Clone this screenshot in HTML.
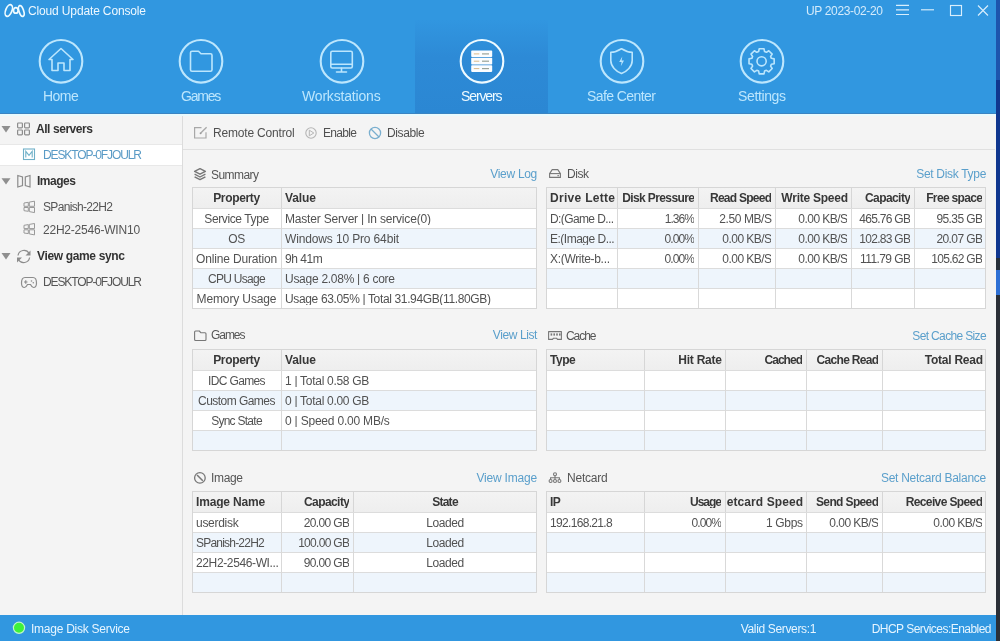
<!DOCTYPE html><html><head><meta charset="utf-8"><style>
*{margin:0;padding:0;box-sizing:border-box}
html,body{width:1000px;height:641px;overflow:hidden;background:#f4f4f4;font-family:"Liberation Sans", sans-serif;font-size:12px;color:#333}
.a{position:absolute}
.t{position:absolute;white-space:nowrap;line-height:1;will-change:transform}
svg{position:absolute;overflow:visible}
</style></head><body><div class="a" style="left:0;top:0;width:1000px;height:113px;background:#3197e0"></div>
<div class="a" style="left:415px;top:20px;width:133px;height:93px;background:linear-gradient(#3196e0,#2d8ad6 40%,#2b87d3)"></div>
<div class="a" style="left:996px;top:0;width:4px;height:80px;background:#1d55ad"></div>
<div class="a" style="left:996px;top:80px;width:4px;height:178px;background:#10378f"></div>
<div class="a" style="left:996px;top:258px;width:4px;height:12px;background:#27303a"></div>
<div class="a" style="left:996px;top:270px;width:4px;height:25px;background:#2f70d4"></div>
<div class="a" style="left:996px;top:295px;width:4px;height:346px;background:#2a2f37"></div>
<svg style="left:0;top:0" width="30" height="22"><g fill="none" stroke="#eefbff" stroke-width="1.7"><ellipse cx="8.8" cy="10.5" rx="3.1" ry="6.1" transform="rotate(22 8.8 10.5)"/><ellipse cx="15.8" cy="10.4" rx="2.3" ry="2.8" /><ellipse cx="21.3" cy="11" rx="2.3" ry="5.6" transform="rotate(-18 21.3 11)"/></g></svg>
<div class="t" style="top:4.54px;font-size:12px;color:#eef8ff;letter-spacing:-0.142px;left:28.00px;">Cloud Update Console</div>
<div class="t" style="top:4.84px;font-size:12px;color:#d4ebfb;letter-spacing:-0.350px;left:806.00px;">UP 2023-02-20</div>
<svg style="left:0;top:0" width="1000" height="30"><g stroke="#d8eefc" stroke-width="1.15" fill="none"><path d="M896 5.3H909M896 9.9H909M896 14.5H909"/><path d="M921 9.8H934"/><rect x="950.5" y="5.5" width="11" height="10"/><path d="M978 5.5L988 15.5M988 5.5L978 15.5"/></g></svg>
<svg style="left:36px;top:36px" width="50" height="50"><circle cx="25" cy="25.3" r="21.3" fill="none" stroke="#bce6fd" stroke-width="2.1"/></svg>
<div class="t" style="top:88.95px;font-size:14px;color:#bce6fd;letter-spacing:-0.517px;left:43.00px;">Home</div>
<svg style="left:176.2px;top:36px" width="50" height="50"><circle cx="25" cy="25.3" r="21.3" fill="none" stroke="#bce6fd" stroke-width="2.1"/></svg>
<div class="t" style="top:88.95px;font-size:14px;color:#bce6fd;letter-spacing:-1.213px;left:180.50px;">Games</div>
<svg style="left:316.5px;top:36px" width="50" height="50"><circle cx="25" cy="25.3" r="21.3" fill="none" stroke="#bce6fd" stroke-width="2.1"/></svg>
<div class="t" style="top:88.95px;font-size:14px;color:#bce6fd;letter-spacing:-0.182px;left:302.40px;">Workstations</div>
<svg style="left:456.5px;top:36px" width="50" height="50"><circle cx="25" cy="25.3" r="21.3" fill="none" stroke="#eefaff" stroke-width="2.1"/></svg>
<div class="t" style="top:88.95px;font-size:14px;color:#eefaff;letter-spacing:-1.117px;left:460.50px;">Servers</div>
<svg style="left:596.5px;top:36px" width="50" height="50"><circle cx="25" cy="25.3" r="21.3" fill="none" stroke="#bce6fd" stroke-width="2.1"/></svg>
<div class="t" style="top:88.95px;font-size:14px;color:#bce6fd;letter-spacing:-0.580px;left:586.80px;">Safe Center</div>
<svg style="left:736.8px;top:36px" width="50" height="50"><circle cx="25" cy="25.3" r="21.3" fill="none" stroke="#bce6fd" stroke-width="2.1"/></svg>
<div class="t" style="top:88.95px;font-size:14px;color:#bce6fd;letter-spacing:-0.371px;left:738.00px;">Settings</div>
<svg style="left:0;top:0" width="1000" height="113"><g fill="none" stroke="#bce6fd" stroke-width="1.6" stroke-linejoin="round" stroke-linecap="round"><path d="M61 48.5 L49 59.5 L52 59.5 L52 70.5 L58 70.5 L58 63 L64 63 L64 70.5 L70 70.5 L70 59.5 L73 59.5 Z"/><path d="M192 51.3 H198.5 L201 53.8 H210.5 Q212 53.8 212 55.3 V69.8 Q212 71.3 210.5 71.3 H192 Q190.5 71.3 190.5 69.8 V52.8 Q190.5 51.3 192 51.3 Z"/><rect x="330.8" y="51.2" width="21.5" height="16.8" rx="1.5"/><path d="M331 64.2 H352 M341.5 68.3 V71.5 M336.5 72 H346.5"/><path d="M621.5 48.8 C617.5 51.3 613.5 52.3 610.8 52.3 V60.5 C610.8 66.5 616 71.3 621.5 73.5 C627 71.3 632.2 66.5 632.2 60.5 V52.3 C629.5 52.3 625.5 51.3 621.5 48.8 Z"/><circle cx="761.6" cy="61.3" r="4.6"/><path d="M771.36 58.34 L774.17 58.90 L774.17 63.70 L771.36 64.26 L770.60 66.11 L772.19 68.49 L768.79 71.89 L766.41 70.30 L764.56 71.06 L764.00 73.87 L759.20 73.87 L758.64 71.06 L756.79 70.30 L754.41 71.89 L751.01 68.49 L752.60 66.11 L751.84 64.26 L749.03 63.70 L749.03 58.90 L751.84 58.34 L752.60 56.49 L751.01 54.11 L754.41 50.71 L756.79 52.30 L758.64 51.54 L759.20 48.73 L764.00 48.73 L764.56 51.54 L766.41 52.30 L768.79 50.71 L772.19 54.11 L770.60 56.49 Z"/></g><path d="M622.3 56.5 L619.2 62 H621.6 L620.8 66.3 L624 60.5 H621.6 Z" fill="#bce6fd"/><g fill="#fbfdff"><rect x="471.2" y="50.6" width="21" height="6.5" rx="0.8"/><rect x="471.2" y="57.8" width="21" height="6.7" rx="0.8"/><rect x="471.2" y="65.2" width="21" height="6.7" rx="0.8"/></g><g fill="#d9b98a"><rect x="473.8" y="53.4" width="5.5" height="1"/><rect x="473.8" y="60.7" width="5.5" height="1"/><rect x="473.8" y="68.1" width="5.5" height="1"/></g><g fill="#9aa39a"><rect x="482" y="53.3" width="7" height="1.2"/><rect x="482" y="60.6" width="7" height="1.2"/><rect x="482" y="68" width="7" height="1.2"/></g></svg>
<div class="a" style="left:0;top:113px;width:182px;height:502px;background:#f4f4f4"></div>
<div class="a" style="left:182px;top:113px;width:1px;height:502px;background:#dcdcdc"></div>
<div class="a" style="left:0;top:144px;width:182px;height:22px;background:#ffffff;border-top:1px solid #e8e8e8;border-bottom:1px solid #e8e8e8"></div>
<div class="t" style="top:122.84px;font-size:12px;color:#333;letter-spacing:-0.440px;font-weight:bold;left:36.00px;">All servers</div>
<div class="t" style="top:148.84px;font-size:12px;color:#5a9bc6;letter-spacing:-1.107px;left:42.60px;">DESKTOP-0FJOULR</div>
<div class="t" style="top:175.14px;font-size:12px;color:#333;letter-spacing:-0.5px;font-weight:bold;left:36.50px;">Images</div>
<div class="t" style="top:201.44px;font-size:12px;color:#555;letter-spacing:-0.673px;left:42.60px;">SPanish-22H2</div>
<div class="t" style="top:223.74px;font-size:12px;color:#555;letter-spacing:-0.214px;left:42.60px;">22H2-2546-WIN10</div>
<div class="t" style="top:250.14px;font-size:12px;color:#333;letter-spacing:-0.346px;font-weight:bold;left:36.50px;">View game sync</div>
<div class="t" style="top:276.44px;font-size:12px;color:#555;letter-spacing:-1.107px;left:42.60px;">DESKTOP-0FJOULR</div>
<svg style="left:0;top:0" width="182" height="300"><g fill="#8f8f8f"><path d="M1.5 126 H10.5 L6 132.5 Z"/><path d="M1.5 178.3 H10.5 L6 184.5 Z"/><path d="M1.5 253 H10.5 L6 259.5 Z"/></g><g fill="none" stroke="#8c8c8c" stroke-width="1.2"><rect x="17.6" y="123" width="4.8" height="4.8" rx="0.8"/><rect x="24.6" y="123" width="4.8" height="4.8" rx="0.8"/><rect x="17.6" y="130" width="4.8" height="4.8" rx="0.8"/><rect x="24.6" y="130" width="4.8" height="4.8" rx="0.8"/><path d="M17.8 175.5 L22.5 177 V185.5 L17.8 187 Z"/><path d="M30 175.5 L25.3 177 V185.5 L30 187 Z"/></g><g fill="none" stroke="#999" stroke-width="1"><path d="M24 203 L28.3 202.3 V206.3 H24 Z M29.3 202.1 L34.5 201.2 V206.3 H29.3 Z M24 207.5 H28.3 V211.3 L24 210.7 Z M29.3 207.5 H34.5 V212.6 L29.3 211.6 Z"/><path d="M24 225.3 L28.3 224.6 V228.6 H24 Z M29.3 224.4 L34.5 223.5 V228.6 H29.3 Z M24 229.8 H28.3 V233.6 L24 233 Z M29.3 229.8 H34.5 V234.9 L29.3 233.9 Z"/></g><g fill="none" stroke="#8c8c8c" stroke-width="1.2"><path d="M18 255.5 A6 6 0 0 1 29.2 253.5"/><path d="M29.6 257.5 A6 6 0 0 1 18.4 259.5"/></g><g fill="#8c8c8c"><path d="M30.5 250.5 V255.5 H25.5 Z"/><path d="M17 262.5 V257.5 H22 Z"/></g><g fill="none" stroke="#8c8c8c" stroke-width="1.2"><path d="M25 277.5 H33 C35.5 277.5 36.5 280 36.5 283 C36.5 286.5 35 287.5 33.5 287.5 C32 287.5 31 285.5 30.5 284.5 H27.5 C27 285.5 26 287.5 24.5 287.5 C23 287.5 21.5 286.5 21.5 283 C21.5 280 22.5 277.5 25 277.5 Z"/><path d="M24 282 H27.5 M25.75 280.3 V283.7"/></g><g fill="#8c8c8c"><circle cx="31.5" cy="281" r="0.8"/><circle cx="33.3" cy="282.8" r="0.8"/></g><rect x="23.5" y="149" width="11" height="10.5" fill="none" stroke="#6fb0c8" stroke-width="1.1"/><path d="M25.8 157.5 V151.3 L29 155.3 L32.2 151.3 V157.5" fill="none" stroke="#6fb0c8" stroke-width="1.1"/></svg>
<div class="a" style="left:183px;top:113px;width:812px;height:36px;background:#f4f4f4"></div>
<div class="a" style="left:183px;top:149px;width:812px;height:1px;background:#e0e0e0"></div>
<div class="t" style="top:126.74px;font-size:12px;color:#505050;letter-spacing:-0.185px;left:212.70px;">Remote Control</div>
<div class="t" style="top:126.74px;font-size:12px;color:#505050;letter-spacing:-0.680px;left:323.00px;">Enable</div>
<div class="t" style="top:126.74px;font-size:12px;color:#505050;letter-spacing:-0.400px;left:387.40px;">Disable</div>
<svg style="left:0;top:0" width="450" height="150"><g fill="none" stroke="#a8a8a8" stroke-width="1.2"><path d="M201.5 127.6 H194.6 V138 H206 V132.3"/><path d="M206.6 127.2 L201 132.8" stroke-width="1.3"/></g><circle cx="200.6" cy="133.2" r="1" fill="#999"/><circle cx="311" cy="133" r="5.2" fill="none" stroke="#b5b5b5" stroke-width="1.1"/><path d="M309.3 130.2 L313.8 133 L309.3 135.8 Z" fill="none" stroke="#b5b5b5" stroke-width="1"/><circle cx="375" cy="133" r="5.6" fill="none" stroke="#7aafcf" stroke-width="1.3"/><path d="M371 129 L379 137" stroke="#7aafcf" stroke-width="1.3"/></svg>

<div class="t" style="top:169.44px;font-size:12px;color:#555;letter-spacing:-0.550px;left:210.60px;">Summary</div>
<div class="t" style="top:168.24px;font-size:12px;color:#5a9fcb;letter-spacing:-0.300px;left:237.00px;width:300px;text-align:right;">View Log</div>
<div class="a" style="left:192px;top:187px;width:345px;height:122px;background:#fff;border:1px solid #d6d6d6"></div>
<div class="a" style="left:193px;top:188px;width:343px;height:20px;background:linear-gradient(#f3f3f3,#eeeeee)"></div>
<div class="a" style="left:193px;top:208px;width:343px;height:1px;background:#dcdcdc"></div>
<div class="a" style="left:193px;top:228px;width:343px;height:1px;background:#dcdcdc"></div>
<div class="a" style="left:193px;top:229px;width:343px;height:19px;background:#eef5fc"></div>
<div class="a" style="left:193px;top:248px;width:343px;height:1px;background:#dcdcdc"></div>
<div class="a" style="left:193px;top:268px;width:343px;height:1px;background:#dcdcdc"></div>
<div class="a" style="left:193px;top:269px;width:343px;height:19px;background:#eef5fc"></div>
<div class="a" style="left:193px;top:288px;width:343px;height:1px;background:#dcdcdc"></div>
<div class="a" style="left:281px;top:188px;width:1px;height:20px;background:#d6d6d6"></div>
<div class="a" style="left:281px;top:209px;width:1px;height:99px;background:#d9d9d9"></div>
<div class="t" style="top:192.34px;font-size:12px;color:#383838;letter-spacing:-0.343px;font-weight:bold;left:192.00px;width:89px;text-align:center;">Property</div>
<div class="t" style="left:284.5px;top:192.34px;width:251px;overflow:hidden;color:#383838;font-weight:bold;letter-spacing:-0.100px">Value</div>
<div class="t" style="top:213.14px;font-size:12px;color:#525252;letter-spacing:-0.391px;left:192.00px;width:89px;text-align:center;">Service Type</div>
<div class="t" style="left:284.5px;top:213.14px;width:251px;overflow:hidden;color:#525252;letter-spacing:-0.186px">Master Server | In service(0)</div>
<div class="t" style="top:233.14px;font-size:12px;color:#525252;letter-spacing:-0.3px;left:192.00px;width:89px;text-align:center;">OS</div>
<div class="t" style="left:284.5px;top:233.14px;width:251px;overflow:hidden;color:#525252;letter-spacing:-0.142px">Windows 10 Pro 64bit</div>
<div class="t" style="top:253.14px;font-size:12px;color:#525252;letter-spacing:-0.171px;left:192.00px;width:89px;text-align:center;">Online Duration</div>
<div class="t" style="left:284.5px;top:253.14px;width:251px;overflow:hidden;color:#525252;letter-spacing:-0.440px">9h 41m</div>
<div class="t" style="top:273.14px;font-size:12px;color:#525252;letter-spacing:-0.725px;left:192.00px;width:89px;text-align:center;">CPU Usage</div>
<div class="t" style="left:284.5px;top:273.14px;width:251px;overflow:hidden;color:#525252;letter-spacing:-0.274px">Usage 2.08% | 6 core</div>
<div class="t" style="top:293.14px;font-size:12px;color:#525252;letter-spacing:-0.127px;left:192.00px;width:89px;text-align:center;">Memory Usage</div>
<div class="t" style="left:284.5px;top:293.14px;width:251px;overflow:hidden;color:#525252;letter-spacing:-0.356px">Usage 63.05% | Total 31.94GB(11.80GB)</div>

<div class="t" style="top:329.34px;font-size:12px;color:#555;letter-spacing:-1.050px;left:211.00px;">Games</div>
<div class="t" style="top:329.34px;font-size:12px;color:#5a9fcb;letter-spacing:-0.400px;left:237.00px;width:300px;text-align:right;">View List</div>
<div class="a" style="left:192px;top:349px;width:345px;height:102px;background:#fff;border:1px solid #d6d6d6"></div>
<div class="a" style="left:193px;top:350px;width:343px;height:20px;background:linear-gradient(#f3f3f3,#eeeeee)"></div>
<div class="a" style="left:193px;top:370px;width:343px;height:1px;background:#dcdcdc"></div>
<div class="a" style="left:193px;top:390px;width:343px;height:1px;background:#dcdcdc"></div>
<div class="a" style="left:193px;top:391px;width:343px;height:19px;background:#eef5fc"></div>
<div class="a" style="left:193px;top:410px;width:343px;height:1px;background:#dcdcdc"></div>
<div class="a" style="left:193px;top:430px;width:343px;height:1px;background:#dcdcdc"></div>
<div class="a" style="left:193px;top:431px;width:343px;height:19px;background:#eef5fc"></div>
<div class="a" style="left:281px;top:350px;width:1px;height:20px;background:#d6d6d6"></div>
<div class="a" style="left:281px;top:371px;width:1px;height:79px;background:#d9d9d9"></div>
<div class="t" style="top:354.34px;font-size:12px;color:#383838;letter-spacing:-0.343px;font-weight:bold;left:192.00px;width:89px;text-align:center;">Property</div>
<div class="t" style="left:284.5px;top:354.34px;width:251px;overflow:hidden;color:#383838;font-weight:bold;letter-spacing:-0.100px">Value</div>
<div class="t" style="top:375.14px;font-size:12px;color:#525252;letter-spacing:-0.638px;left:192.00px;width:89px;text-align:center;">IDC Games</div>
<div class="t" style="left:284.5px;top:375.14px;width:251px;overflow:hidden;color:#525252;letter-spacing:-0.287px">1 | Total 0.58 GB</div>
<div class="t" style="top:395.14px;font-size:12px;color:#525252;letter-spacing:-0.545px;left:192.00px;width:89px;text-align:center;">Custom Games</div>
<div class="t" style="left:284.5px;top:395.14px;width:251px;overflow:hidden;color:#525252;letter-spacing:-0.287px">0 | Total 0.00 GB</div>
<div class="t" style="top:415.14px;font-size:12px;color:#525252;letter-spacing:-0.733px;left:192.00px;width:89px;text-align:center;">Sync State</div>
<div class="t" style="left:284.5px;top:415.14px;width:251px;overflow:hidden;color:#525252;letter-spacing:-0.206px">0 | Speed 0.00 MB/s</div>

<div class="t" style="top:471.84px;font-size:12px;color:#555;letter-spacing:-0.350px;left:211.00px;">Image</div>
<div class="t" style="top:472.24px;font-size:12px;color:#5a9fcb;letter-spacing:-0.189px;left:237.00px;width:300px;text-align:right;">View Image</div>
<div class="a" style="left:192px;top:491px;width:345px;height:102px;background:#fff;border:1px solid #d6d6d6"></div>
<div class="a" style="left:193px;top:492px;width:343px;height:20px;background:linear-gradient(#f3f3f3,#eeeeee)"></div>
<div class="a" style="left:193px;top:512px;width:343px;height:1px;background:#dcdcdc"></div>
<div class="a" style="left:193px;top:532px;width:343px;height:1px;background:#dcdcdc"></div>
<div class="a" style="left:193px;top:533px;width:343px;height:19px;background:#eef5fc"></div>
<div class="a" style="left:193px;top:552px;width:343px;height:1px;background:#dcdcdc"></div>
<div class="a" style="left:193px;top:572px;width:343px;height:1px;background:#dcdcdc"></div>
<div class="a" style="left:193px;top:573px;width:343px;height:19px;background:#eef5fc"></div>
<div class="a" style="left:281px;top:492px;width:1px;height:20px;background:#d6d6d6"></div>
<div class="a" style="left:281px;top:513px;width:1px;height:79px;background:#d9d9d9"></div>
<div class="a" style="left:353px;top:492px;width:1px;height:20px;background:#d6d6d6"></div>
<div class="a" style="left:353px;top:513px;width:1px;height:79px;background:#d9d9d9"></div>
<div class="t" style="left:195.5px;top:496.34px;width:84px;overflow:hidden;color:#383838;font-weight:bold;letter-spacing:-0.167px">Image Name</div>
<div class="t" style="left:282px;top:496.34px;width:67.42857142857143px;overflow:hidden;display:flex;justify-content:flex-end;color:#383838;font-weight:bold;letter-spacing:-0.571px"><span style="flex:none">Capacity</span></div>
<div class="t" style="top:496.34px;font-size:12px;color:#383838;letter-spacing:-0.725px;font-weight:bold;left:353.00px;width:184px;text-align:center;">State</div>
<div class="t" style="left:195.5px;top:517.14px;width:84px;overflow:hidden;color:#525252;letter-spacing:-0.286px">userdisk</div>
<div class="t" style="left:282px;top:517.14px;width:67.35714285714286px;overflow:hidden;display:flex;justify-content:flex-end;color:#525252;letter-spacing:-0.643px"><span style="flex:none">20.00 GB</span></div>
<div class="t" style="top:517.14px;font-size:12px;color:#525252;letter-spacing:-0.400px;left:353.00px;width:184px;text-align:center;">Loaded</div>
<div class="t" style="left:195.5px;top:537.14px;width:84px;overflow:hidden;color:#525252;letter-spacing:-0.791px">SPanish-22H2</div>
<div class="t" style="left:282px;top:537.14px;width:67.3125px;overflow:hidden;display:flex;justify-content:flex-end;color:#525252;letter-spacing:-0.688px"><span style="flex:none">100.00 GB</span></div>
<div class="t" style="top:537.14px;font-size:12px;color:#525252;letter-spacing:-0.400px;left:353.00px;width:184px;text-align:center;">Loaded</div>
<div class="t" style="left:195.5px;top:557.14px;width:84px;overflow:hidden;color:#525252;letter-spacing:-0.371px">22H2-2546-WI...</div>
<div class="t" style="left:282px;top:557.14px;width:67.35714285714286px;overflow:hidden;display:flex;justify-content:flex-end;color:#525252;letter-spacing:-0.643px"><span style="flex:none">90.00 GB</span></div>
<div class="t" style="top:557.14px;font-size:12px;color:#525252;letter-spacing:-0.400px;left:353.00px;width:184px;text-align:center;">Loaded</div>

<div class="t" style="top:167.64px;font-size:12px;color:#555;letter-spacing:-0.467px;left:566.50px;">Disk</div>
<div class="t" style="top:167.64px;font-size:12px;color:#5a9fcb;letter-spacing:-0.317px;left:686.20px;width:300px;text-align:right;">Set Disk Type</div>
<div class="a" style="left:546px;top:187px;width:440px;height:122px;background:#fff;border:1px solid #d6d6d6"></div>
<div class="a" style="left:547px;top:188px;width:438px;height:20px;background:linear-gradient(#f3f3f3,#eeeeee)"></div>
<div class="a" style="left:547px;top:208px;width:438px;height:1px;background:#dcdcdc"></div>
<div class="a" style="left:547px;top:228px;width:438px;height:1px;background:#dcdcdc"></div>
<div class="a" style="left:547px;top:229px;width:438px;height:19px;background:#eef5fc"></div>
<div class="a" style="left:547px;top:248px;width:438px;height:1px;background:#dcdcdc"></div>
<div class="a" style="left:547px;top:268px;width:438px;height:1px;background:#dcdcdc"></div>
<div class="a" style="left:547px;top:269px;width:438px;height:19px;background:#eef5fc"></div>
<div class="a" style="left:547px;top:288px;width:438px;height:1px;background:#dcdcdc"></div>
<div class="a" style="left:617px;top:188px;width:1px;height:20px;background:#d6d6d6"></div>
<div class="a" style="left:617px;top:209px;width:1px;height:99px;background:#d9d9d9"></div>
<div class="a" style="left:698px;top:188px;width:1px;height:20px;background:#d6d6d6"></div>
<div class="a" style="left:698px;top:209px;width:1px;height:99px;background:#d9d9d9"></div>
<div class="a" style="left:775px;top:188px;width:1px;height:20px;background:#d6d6d6"></div>
<div class="a" style="left:775px;top:209px;width:1px;height:99px;background:#d9d9d9"></div>
<div class="a" style="left:851px;top:188px;width:1px;height:20px;background:#d6d6d6"></div>
<div class="a" style="left:851px;top:209px;width:1px;height:99px;background:#d9d9d9"></div>
<div class="a" style="left:914px;top:188px;width:1px;height:20px;background:#d6d6d6"></div>
<div class="a" style="left:914px;top:209px;width:1px;height:99px;background:#d9d9d9"></div>
<div class="t" style="left:549.5px;top:192.34px;width:66px;overflow:hidden;color:#383838;font-weight:bold;letter-spacing:0.300px">Drive Letter</div>
<div class="t" style="left:618px;top:192.34px;width:76.4px;overflow:hidden;display:flex;justify-content:flex-end;color:#383838;font-weight:bold;letter-spacing:-0.600px"><span style="flex:none">Disk Pressure</span></div>
<div class="t" style="left:699px;top:192.34px;width:72.25555555555556px;overflow:hidden;display:flex;justify-content:flex-end;color:#383838;font-weight:bold;letter-spacing:-0.744px"><span style="flex:none">Read Speed</span></div>
<div class="t" style="left:776px;top:192.34px;width:71.75px;overflow:hidden;display:flex;justify-content:flex-end;color:#383838;font-weight:bold;letter-spacing:-0.250px"><span style="flex:none">Write Speed</span></div>
<div class="t" style="left:852px;top:192.34px;width:58.42857142857143px;overflow:hidden;display:flex;justify-content:flex-end;color:#383838;font-weight:bold;letter-spacing:-0.571px"><span style="flex:none">Capacity</span></div>
<div class="t" style="left:915px;top:192.34px;width:67.34444444444445px;overflow:hidden;display:flex;justify-content:flex-end;color:#383838;font-weight:bold;letter-spacing:-0.656px"><span style="flex:none">Free space</span></div>
<div class="t" style="left:549.5px;top:213.14px;width:66px;overflow:hidden;color:#525252;letter-spacing:-0.609px">D:(Game D...</div>
<div class="t" style="left:618px;top:213.14px;width:76.075px;overflow:hidden;display:flex;justify-content:flex-end;color:#525252;letter-spacing:-0.925px"><span style="flex:none">1.36%</span></div>
<div class="t" style="left:699px;top:213.14px;width:72.5875px;overflow:hidden;display:flex;justify-content:flex-end;color:#525252;letter-spacing:-0.412px"><span style="flex:none">2.50 MB/S</span></div>
<div class="t" style="left:776px;top:213.14px;width:71.45px;overflow:hidden;display:flex;justify-content:flex-end;color:#525252;letter-spacing:-0.550px"><span style="flex:none">0.00 KB/S</span></div>
<div class="t" style="left:852px;top:213.14px;width:58.2875px;overflow:hidden;display:flex;justify-content:flex-end;color:#525252;letter-spacing:-0.712px"><span style="flex:none">465.76 GB</span></div>
<div class="t" style="left:915px;top:213.14px;width:67.41428571428571px;overflow:hidden;display:flex;justify-content:flex-end;color:#525252;letter-spacing:-0.586px"><span style="flex:none">95.35 GB</span></div>
<div class="t" style="left:549.5px;top:233.14px;width:66px;overflow:hidden;color:#525252;letter-spacing:-0.500px">E:(Image D...</div>
<div class="t" style="left:618px;top:233.14px;width:76.1px;overflow:hidden;display:flex;justify-content:flex-end;color:#525252;letter-spacing:-0.900px"><span style="flex:none">0.00%</span></div>
<div class="t" style="left:699px;top:233.14px;width:72.45px;overflow:hidden;display:flex;justify-content:flex-end;color:#525252;letter-spacing:-0.550px"><span style="flex:none">0.00 KB/S</span></div>
<div class="t" style="left:776px;top:233.14px;width:71.45px;overflow:hidden;display:flex;justify-content:flex-end;color:#525252;letter-spacing:-0.550px"><span style="flex:none">0.00 KB/S</span></div>
<div class="t" style="left:852px;top:233.14px;width:58.2875px;overflow:hidden;display:flex;justify-content:flex-end;color:#525252;letter-spacing:-0.712px"><span style="flex:none">102.83 GB</span></div>
<div class="t" style="left:915px;top:233.14px;width:67.41428571428571px;overflow:hidden;display:flex;justify-content:flex-end;color:#525252;letter-spacing:-0.586px"><span style="flex:none">20.07 GB</span></div>
<div class="t" style="left:549.5px;top:253.14px;width:66px;overflow:hidden;color:#525252;letter-spacing:-0.317px">X:(Write-b...</div>
<div class="t" style="left:618px;top:253.14px;width:76.1px;overflow:hidden;display:flex;justify-content:flex-end;color:#525252;letter-spacing:-0.900px"><span style="flex:none">0.00%</span></div>
<div class="t" style="left:699px;top:253.14px;width:72.45px;overflow:hidden;display:flex;justify-content:flex-end;color:#525252;letter-spacing:-0.550px"><span style="flex:none">0.00 KB/S</span></div>
<div class="t" style="left:776px;top:253.14px;width:71.45px;overflow:hidden;display:flex;justify-content:flex-end;color:#525252;letter-spacing:-0.550px"><span style="flex:none">0.00 KB/S</span></div>
<div class="t" style="left:852px;top:253.14px;width:58.425px;overflow:hidden;display:flex;justify-content:flex-end;color:#525252;letter-spacing:-0.575px"><span style="flex:none">111.79 GB</span></div>
<div class="t" style="left:915px;top:253.14px;width:67.2875px;overflow:hidden;display:flex;justify-content:flex-end;color:#525252;letter-spacing:-0.712px"><span style="flex:none">105.62 GB</span></div>

<div class="t" style="top:329.54px;font-size:12px;color:#555;letter-spacing:-1.050px;left:566.40px;">Cache</div>
<div class="t" style="top:329.54px;font-size:12px;color:#5a9fcb;letter-spacing:-0.646px;left:686.00px;width:300px;text-align:right;">Set Cache Size</div>
<div class="a" style="left:546px;top:349px;width:440px;height:102px;background:#fff;border:1px solid #d6d6d6"></div>
<div class="a" style="left:547px;top:350px;width:438px;height:20px;background:linear-gradient(#f3f3f3,#eeeeee)"></div>
<div class="a" style="left:547px;top:370px;width:438px;height:1px;background:#dcdcdc"></div>
<div class="a" style="left:547px;top:390px;width:438px;height:1px;background:#dcdcdc"></div>
<div class="a" style="left:547px;top:391px;width:438px;height:19px;background:#eef5fc"></div>
<div class="a" style="left:547px;top:410px;width:438px;height:1px;background:#dcdcdc"></div>
<div class="a" style="left:547px;top:430px;width:438px;height:1px;background:#dcdcdc"></div>
<div class="a" style="left:547px;top:431px;width:438px;height:19px;background:#eef5fc"></div>
<div class="a" style="left:644px;top:350px;width:1px;height:20px;background:#d6d6d6"></div>
<div class="a" style="left:644px;top:371px;width:1px;height:79px;background:#d9d9d9"></div>
<div class="a" style="left:725px;top:350px;width:1px;height:20px;background:#d6d6d6"></div>
<div class="a" style="left:725px;top:371px;width:1px;height:79px;background:#d9d9d9"></div>
<div class="a" style="left:806px;top:350px;width:1px;height:20px;background:#d6d6d6"></div>
<div class="a" style="left:806px;top:371px;width:1px;height:79px;background:#d9d9d9"></div>
<div class="a" style="left:882px;top:350px;width:1px;height:20px;background:#d6d6d6"></div>
<div class="a" style="left:882px;top:371px;width:1px;height:79px;background:#d9d9d9"></div>
<div class="t" style="left:549.5px;top:354.34px;width:93px;overflow:hidden;color:#383838;font-weight:bold;letter-spacing:-0.467px">Type</div>
<div class="t" style="left:645px;top:354.34px;width:76.77142857142857px;overflow:hidden;display:flex;justify-content:flex-end;color:#383838;font-weight:bold;letter-spacing:-0.229px"><span style="flex:none">Hit Rate</span></div>
<div class="t" style="left:726px;top:354.34px;width:76.02px;overflow:hidden;display:flex;justify-content:flex-end;color:#383838;font-weight:bold;letter-spacing:-0.980px"><span style="flex:none">Cached</span></div>
<div class="t" style="left:807px;top:354.34px;width:71.3px;overflow:hidden;display:flex;justify-content:flex-end;color:#383838;font-weight:bold;letter-spacing:-0.700px"><span style="flex:none">Cache Read</span></div>
<div class="t" style="left:883px;top:354.34px;width:99.75555555555556px;overflow:hidden;display:flex;justify-content:flex-end;color:#383838;font-weight:bold;letter-spacing:-0.244px"><span style="flex:none">Total Read</span></div>

<div class="t" style="top:471.84px;font-size:12px;color:#555;letter-spacing:-0.217px;left:566.80px;">Netcard</div>
<div class="t" style="top:471.84px;font-size:12px;color:#5a9fcb;letter-spacing:-0.261px;left:686.40px;width:300px;text-align:right;">Set Netcard Balance</div>
<div class="a" style="left:546px;top:491px;width:440px;height:102px;background:#fff;border:1px solid #d6d6d6"></div>
<div class="a" style="left:547px;top:492px;width:438px;height:20px;background:linear-gradient(#f3f3f3,#eeeeee)"></div>
<div class="a" style="left:547px;top:512px;width:438px;height:1px;background:#dcdcdc"></div>
<div class="a" style="left:547px;top:532px;width:438px;height:1px;background:#dcdcdc"></div>
<div class="a" style="left:547px;top:533px;width:438px;height:19px;background:#eef5fc"></div>
<div class="a" style="left:547px;top:552px;width:438px;height:1px;background:#dcdcdc"></div>
<div class="a" style="left:547px;top:572px;width:438px;height:1px;background:#dcdcdc"></div>
<div class="a" style="left:547px;top:573px;width:438px;height:19px;background:#eef5fc"></div>
<div class="a" style="left:644px;top:492px;width:1px;height:20px;background:#d6d6d6"></div>
<div class="a" style="left:644px;top:513px;width:1px;height:79px;background:#d9d9d9"></div>
<div class="a" style="left:725px;top:492px;width:1px;height:20px;background:#d6d6d6"></div>
<div class="a" style="left:725px;top:513px;width:1px;height:79px;background:#d9d9d9"></div>
<div class="a" style="left:806px;top:492px;width:1px;height:20px;background:#d6d6d6"></div>
<div class="a" style="left:806px;top:513px;width:1px;height:79px;background:#d9d9d9"></div>
<div class="a" style="left:882px;top:492px;width:1px;height:20px;background:#d6d6d6"></div>
<div class="a" style="left:882px;top:513px;width:1px;height:79px;background:#d9d9d9"></div>
<div class="t" style="left:549.5px;top:496.34px;width:93px;overflow:hidden;color:#383838;font-weight:bold;letter-spacing:-0.500px">IP</div>
<div class="t" style="left:645px;top:496.34px;width:75.975px;overflow:hidden;display:flex;justify-content:flex-end;color:#383838;font-weight:bold;letter-spacing:-1.025px"><span style="flex:none">Usage</span></div>
<div class="t" style="left:726px;top:496.34px;width:77.08333333333333px;overflow:hidden;display:flex;justify-content:flex-end;color:#383838;font-weight:bold;letter-spacing:0.083px"><span style="flex:none">Netcard Speed</span></div>
<div class="t" style="left:807px;top:496.34px;width:71.36666666666666px;overflow:hidden;display:flex;justify-content:flex-end;color:#383838;font-weight:bold;letter-spacing:-0.633px"><span style="flex:none">Send Speed</span></div>
<div class="t" style="left:883px;top:496.34px;width:99.38333333333333px;overflow:hidden;display:flex;justify-content:flex-end;color:#383838;font-weight:bold;letter-spacing:-0.617px"><span style="flex:none">Receive Speed</span></div>
<div class="t" style="left:549.5px;top:517.14px;width:93px;overflow:hidden;color:#525252;letter-spacing:-0.673px">192.168.21.8</div>
<div class="t" style="left:645px;top:517.14px;width:76.1px;overflow:hidden;display:flex;justify-content:flex-end;color:#525252;letter-spacing:-0.900px"><span style="flex:none">0.00%</span></div>
<div class="t" style="left:726px;top:517.14px;width:76.66px;overflow:hidden;display:flex;justify-content:flex-end;color:#525252;letter-spacing:-0.340px"><span style="flex:none">1 Gbps</span></div>
<div class="t" style="left:807px;top:517.14px;width:71.45px;overflow:hidden;display:flex;justify-content:flex-end;color:#525252;letter-spacing:-0.550px"><span style="flex:none">0.00 KB/S</span></div>
<div class="t" style="left:883px;top:517.14px;width:99.45px;overflow:hidden;display:flex;justify-content:flex-end;color:#525252;letter-spacing:-0.550px"><span style="flex:none">0.00 KB/S</span></div>
<svg style="left:0;top:0" width="1000" height="641"><g fill="none" stroke="#777" stroke-width="1.1" stroke-linejoin="round"><path d="M200 168.6 L194.6 171.4 L200 174.2 L205.4 171.4 Z" stroke-width="1.4"/><path d="M194.6 174.2 L200 177 L205.4 174.2" stroke-width="1.4"/><path d="M194.6 176.8 L200 179.6 L205.4 176.8" stroke-width="1.4"/><path d="M195.6 331 H199.3 L201 332.8 H205 Q206 332.8 206 333.8 V339.5 Q206 340.5 205 340.5 H195.6 Q194.6 340.5 194.6 339.5 V332 Q194.6 331 195.6 331 Z"/><circle cx="199.9" cy="477.9" r="5.3" stroke-width="1.3"/><path d="M197 475 L202.8 480.8" stroke-width="1.5"/><path d="M549.6 177.4 V173.6 L552.2 169.6 H557.8 L560.4 173.6 V177.4 Z"/><path d="M549.6 173.6 H560.4"/><path d="M557.5 175.6 H558.8" stroke-width="1.3"/><path d="M548.6 331.6 H561.4 V339.4 H557.5 L556.5 338.2 H553.5 L552.5 339.4 H548.6 Z"/></g><g fill="#777"><rect x="550.6" y="333.4" width="1.6" height="2.2"/><rect x="553.4" y="333.4" width="1.6" height="2.2"/><rect x="556.2" y="333.4" width="1.6" height="2.2"/><rect x="559" y="333.4" width="1.6" height="2.2"/></g><g fill="none" stroke="#777" stroke-width="1.1"><circle cx="555" cy="474.3" r="1.5"/><circle cx="550.6" cy="481" r="1.5"/><circle cx="555" cy="481" r="1.5"/><circle cx="559.4" cy="481" r="1.5"/><path d="M555 475.8 V479.5 M550.6 479.5 V477.8 H559.4 V479.5"/></g></svg>
<div class="a" style="left:0;top:113px;width:996px;height:1px;background:#3a84c2"></div>
<div class="a" style="left:0;top:114px;width:996px;height:2px;background:#e9fafd"></div>
<div class="a" style="left:0;top:615px;width:996px;height:26px;background:#3197e0"></div>
<svg style="left:0;top:600px" width="40" height="41"><circle cx="19" cy="27.8" r="5.6" fill="#3ef23a" stroke="#bff7c8" stroke-width="1.2"/></svg>
<div class="t" style="top:622.64px;font-size:12px;color:#e6f5ff;letter-spacing:-0.259px;left:31.00px;">Image Disk Service</div>
<div class="t" style="top:622.84px;font-size:12px;color:#e6f5ff;letter-spacing:-0.350px;left:516.00px;width:300px;text-align:right;">Valid Servers:1</div>
<div class="t" style="top:622.84px;font-size:12px;color:#e6f5ff;letter-spacing:-0.535px;left:691.30px;width:300px;text-align:right;">DHCP Services:Enabled</div></body></html>
